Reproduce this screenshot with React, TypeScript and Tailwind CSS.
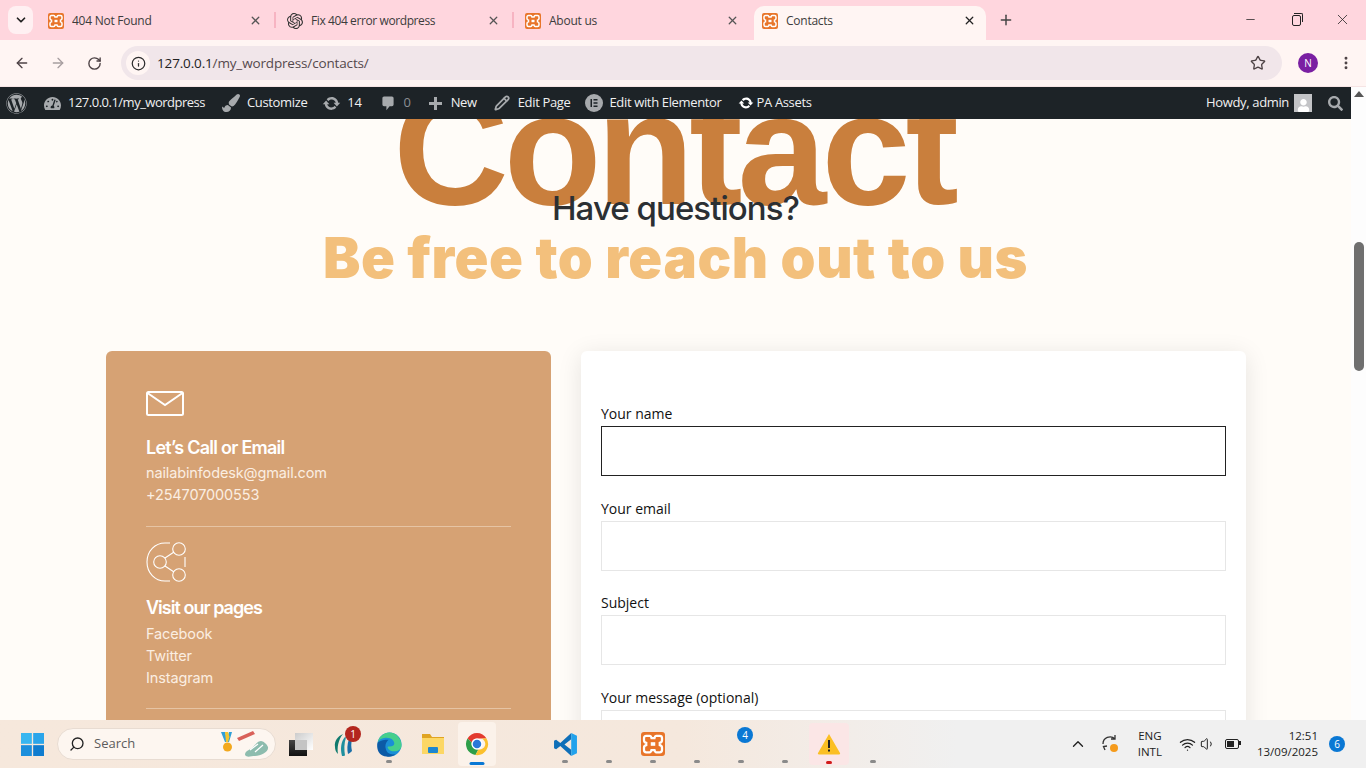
import { ArrowLeft, ArrowRight, RotateCw, Info, Star, X, Plus, ChevronDown, ChevronUp, Minus, MoreVertical, Search, Wifi, Volume1, Pencil } from 'lucide-react';
import { FaWordpress, FaPaintBrush, FaSearch, FaUser, FaTachometerAlt } from 'react-icons/fa';
import { SiOpenai } from 'react-icons/si';

const chromeFont = '[font-family:"Open_Sans","Liberation_Sans",sans-serif]';

function Xampp({ size = 16 }: { size?: number }) {
  return (
    <svg width={size} height={size} viewBox="0 0 16 16" className="shrink-0">
      <rect width="16" height="16" rx="2" fill="#e8752a" />
      <path d="M3.500 2.500h2.300c.8 0 1 .6 1.200 1.500h2c.2-.9.4-1.500 1.200-1.500h2.300c1 0 1.500.7 1.500 1.500v1.500c0 1-.6 1.500-1.500 1.700v1.600c.9.2 1.500.7 1.500 1.700V12c0 .8-.5 1.500-1.500 1.500h-2.300c-.8 0-1-.6-1.200-1.500H7c-.2.900-.4 1.500-1.200 1.500H3.500C2.500 13.500 2 12.800 2 12v-1.500c0-1 .6-1.500 1.500-1.700V7.200C2.600 7 2 6.500 2 5.500V4c0-.8.5-1.500 1.500-1.500z" fill="none" stroke="#fff" strokeWidth="1.500" />
      <rect x="6.500" y="6.800" width="3" height="2.400" fill="#fff" />
    </svg>
  );
}

function UpdateIcon({ size, className }: { size: number; className: string }) {
  return (
    <svg width={size} height={size} viewBox="0 0 20 20" fill="currentColor" className={`shrink-0 ${className}`}>
      <path d="M10.200 3.280c3.530 0 6.430 2.610 6.900 6h2.080l-3.500 4-3.500-4h2.320c-.45-1.970-2.210-3.440-4.300-3.440-1.450 0-2.730.71-3.540 1.800L4.950 5.650c1.280-1.440 3.140-2.370 5.250-2.370zm-.4 13.440c-3.520 0-6.430-2.610-6.900-6H.82l3.500-4c1.170 1.330 2.330 2.670 3.500 4H5.500c.45 1.980 2.210 3.440 4.300 3.440 1.450 0 2.730-.71 3.540-1.800l1.710 1.950c-1.280 1.440-3.140 2.410-5.250 2.410z" />
    </svg>
  );
}

function Tab({ title, icon, active, width, tight }: { title: string; icon: React.ReactNode; active?: boolean; width: string; tight?: boolean }) {
  return (
    <div className={`flex items-center h-[34px] mt-[6px] pb-[5px] pl-2 pr-[10px] gap-2 ${width} ${active ? 'bg-[#fff5f3] rounded-t-[10px]' : ''}`}>
      {icon}
      <span className={`flex-1 truncate text-xs text-[#3c3c3c] ${tight ? 'tracking-[-0.4px]' : 'tracking-[-0.25px]'}`}>{title}</span>
      <X size={13} strokeWidth={2.4} className={active ? 'text-[#222]' : 'text-[#555]'} />
    </div>
  );
}

function TabStrip() {
  return (
    <div className="h-10 bg-[#ffd6de] flex items-start shrink-0">
      <div className="ml-[8px] mt-[6px] w-[25px] h-[28px] rounded-lg bg-[#fff0f2] flex items-center justify-center">
        <ChevronDown size={14} strokeWidth={3} className="text-[#222]" />
      </div>
      <div className="ml-[7px] flex items-start">
        <Tab title="404 Not Found" icon={<Xampp />} width="w-[232px]" />
        <div className="w-[2px] h-4 mt-3 ml-[2px] mr-[3px] bg-[#f7b4c2]" />
        <Tab title="Fix 404 error wordpress" tight icon={<SiOpenai size={16} className="text-[#333] shrink-0" />} width="w-[231px]" />
        <div className="w-[2px] h-4 mt-3 ml-[2px] mr-[3px] bg-[#f7b4c2]" />
        <Tab title="About us" icon={<Xampp />} width="w-[232px]" />
        <div className="w-[5px]" />
        <Tab title="Contacts" icon={<Xampp />} active width="w-[232px]" />
      </div>
      <Plus size={16} strokeWidth={2.2} className="ml-[12px] mt-3 text-[#444]" />
      <div className="ml-auto flex items-center h-[40px] pb-[1px] text-[#222]">
        <div className="w-[46px] flex justify-center"><Minus size={13} strokeWidth={1.4} /></div>
        <div className="w-[46px] flex justify-center">
          <div className="relative w-[9px] h-[11px] border border-[#222] rounded-[2px] bg-[#ffd6de] mt-[1px]">
            <div className="absolute -top-[3px] left-[1px] w-[9px] h-[9px] border-t border-r border-[#222] rounded-tr-[2px]" />
          </div>
        </div>
        <div className="w-[47px] flex justify-center"><X size={17} strokeWidth={1.1} /></div>
      </div>
    </div>
  );
}

function Toolbar() {
  return (
    <div className="h-[47px] bg-[#fff5f3] flex items-center shrink-0 border-b border-[#f6e4e4]">
      <div className="flex items-center gap-5 pl-[14px] pr-[19px]">
        <ArrowLeft size={16} strokeWidth={2} className="text-[#4d4245]" />
        <ArrowRight size={16} strokeWidth={2} className="text-[#a79ea0]" />
        <RotateCw size={15} strokeWidth={2.2} className="text-[#4d4245] ml-[1px]" />
      </div>
      <div className="w-[1161px] h-[34px] rounded-full bg-[#f1e6ea] flex items-center pl-[5px] pr-4">
        <div className="w-6 h-6 rounded-full bg-[#fff5f3] flex items-center justify-center">
          <Info size={15} strokeWidth={2} className="text-[#2c2c2c]" />
        </div>
        <span className="ml-[7px] text-[13.5px] tracking-[-0.15px] text-[#55494d]"><span className="text-[#222]">127.0.0.1</span>/my_wordpress/contacts/</span>
        <Star size={16} strokeWidth={2} className="ml-auto text-[#4d4245]" />
      </div>
      <div className="ml-[16px] w-5 h-5 rounded-full bg-[#7a1fa2] text-white text-[10px] flex items-center justify-center">N</div>
      <MoreVertical size={16} strokeWidth={2.4} className="ml-[20px] text-[#4d4245]" />
    </div>
  );
}

function BarItem({ icon, label, className = '' }: { icon: React.ReactNode; label: string; className?: string }) {
  return (
    <div className={`flex items-center ${className}`}>
      {icon}
      <span>{label}</span>
    </div>
  );
}

function AdminBar() {
  const ic = 'text-[#a7aaad]';
  return (
    <div className="h-8 bg-[#1d2327] flex items-center text-[13px] text-[#f0f0f1] pl-[6px] pr-[8px] tracking-[-0.35px]">
      <FaWordpress size={21} className={ic} />
      <BarItem className="ml-[17px] gap-[7px] tracking-[-0.5px]" icon={<FaTachometerAlt size={17} className={ic} />} label="127.0.0.1/my_wordpress" />
      <BarItem className="ml-[17px] gap-[7px]" icon={<FaPaintBrush size={18} className={ic} />} label="Customize" />
      <BarItem className="ml-[15px] gap-[6px]" icon={<UpdateIcon size={19} className={ic} />} label="14" />
      <BarItem
        className="ml-[18px] gap-[8px] text-[#8c8f94]"
        icon={
          <svg width="16" height="16" viewBox="0 0 20 20" fill="currentColor" className={ic}>
            <path d="M5 2h10c1.100 0 2 .9 2 2v8c0 1.100-.9 2-2 2h-3l-4 5v-5H5c-1.100 0-2-.9-2-2V4c0-1.100.9-2 2-2z" />
          </svg>
        }
        label="0"
      />
      <BarItem
        className="ml-[17px] gap-[8px]"
        icon={
          <svg width="15" height="15" viewBox="0 0 15 15" fill="currentColor" className={ic}>
            <path d="M6 1h3v5h5v3H9v5H6V9H1V6h5z" />
          </svg>
        }
        label="New"
      />
      <BarItem className="ml-[17px] gap-[8px]" icon={<Pencil size={16} strokeWidth={2.6} className={ic} />} label="Edit Page" />
      <BarItem
        className="ml-[15px] gap-[6px]"
        icon={
          <svg width="18" height="18" viewBox="0 0 18 18" className={ic}>
            <circle cx="9" cy="9" r="9" fill="currentColor" />
            <rect x="5.500" y="5" width="1.500" height="8" fill="#1d2327" />
            <rect x="8.500" y="5" width="4" height="1.500" fill="#1d2327" />
            <rect x="8.500" y="8.250" width="4" height="1.500" fill="#1d2327" />
            <rect x="8.500" y="11.500" width="4" height="1.500" fill="#1d2327" />
          </svg>
        }
        label="Edit with Elementor"
      />
      <BarItem className="ml-[16px] gap-[3px]" icon={<UpdateIcon size={16} className="text-white" />} label="PA Assets" />
      <div className="ml-auto flex items-center gap-[5px]">
        <span>Howdy, admin</span>
        <span className="w-[18px] h-[18px] bg-[#c3c4c7] flex items-end justify-center overflow-hidden"><FaUser size={13} className="text-white" /></span>
      </div>
      <FaSearch size={15} className="ml-[16px] text-[#a7aaad]" />
    </div>
  );
}

function ShareIcon() {
  return (
    <svg width="40" height="40" viewBox="0 0 40 40" fill="none" stroke="#fff" strokeWidth="1.100">
      <path d="M24 1H19C9 1 1 9 1 20s8 19 18 19h5" />
      <circle cx="33" cy="7" r="6.300" />
      <circle cx="33" cy="33" r="6.300" />
      <circle cx="14" cy="20" r="6.300" />
      <path d="M19 16l9-6M19 24l9 6M39 15v10" />
    </svg>
  );
}

function InfoCard() {
  return (
    <div className="w-[445px] h-[500px] shrink-0 rounded-[6px] bg-[#d6a274] pt-[40px] px-[40px] text-white">
      <svg width="38" height="25" viewBox="0 0 38 25" fill="none" stroke="#fff" strokeWidth="2" className="block">
        <rect x="1" y="1" width="36" height="23" rx="1.500" />
        <path d="M1.500 2L19 14 36.500 2" />
      </svg>
      <h3 className="mt-[19px] text-[18px] leading-[26px] font-semibold tracking-[-0.75px]">Let’s Call or Email</h3>
      <div className="mt-[1px] text-[14.500px] tracking-[-0.13px] leading-[22px] text-[#fbeee2]">
        <p>nailabinfodesk@gmail.com</p>
        <p>+254707000553</p>
      </div>
      <div className="mt-[20px] h-px bg-[#e6c4a4]" />
      <div className="mt-[15px]"><ShareIcon /></div>
      <h3 className="mt-[13px] text-[18px] leading-[26px] font-semibold tracking-[-0.98px]">Visit our pages</h3>
      <div className="mt-[2px] text-[14.500px] tracking-[-0.13px] leading-[22px] text-[#fbeee2]">
        <p>Facebook</p>
        <p>Twitter</p>
        <p>Instagram</p>
      </div>
      <div className="mt-[19px] h-px bg-[#e6c4a4]" />
    </div>
  );
}

function Field({ label, focused }: { label: string; focused?: boolean }) {
  return (
    <div className="mb-[22.500px]">
      <label className={`block text-[14px] leading-[20px] text-[#111] mb-[2px] ${chromeFont}`}>{label}</label>
      <div className={`h-[50px] bg-white border ${focused ? 'border-[#222]' : 'border-[#e6e6e6]'}`} />
    </div>
  );
}

function FormCard() {
  return (
    <div className="w-[665px] h-[500px] shrink-0 rounded-[6px] bg-white px-5 pt-[53px] shadow-[0_4px_24px_rgba(0,0,0,0.1)]">
      <Field label="Your name" focused />
      <Field label="Your email" />
      <Field label="Subject" />
      <Field label="Your message (optional)" />
    </div>
  );
}

function Page() {
  return (
    <div className="flex-1 relative overflow-hidden bg-[#fffcf8] [font-family:Inter,'Liberation_Sans',sans-serif]">
      <div className="flex flex-col items-center">
        <h1 className="mt-[-50px] mr-[4px] h-[149px] text-[160px] leading-[160px] font-bold text-[#c97f3d] tracking-[-5px] [font-family:'Liberation_Sans',sans-serif] whitespace-nowrap">Contact</h1>
        <h2 className="relative mt-[-30px] text-[33px] leading-[40px] font-medium text-[#2b2f33] tracking-[-0.95px]">Have questions?</h2>
        <h2 className="text-[56px] leading-[60px] font-black text-[#f3c07c] tracking-[0.6px] whitespace-nowrap">Be free to reach out to us</h2>
      </div>
      <div className="mt-[63px] ml-[106px] flex gap-[30px]">
        <InfoCard />
        <FormCard />
      </div>
    </div>
  );
}

function Scrollbar() {
  return (
    <div className="w-[15px] bg-[#fdfdfd] flex flex-col items-center shrink-0">
      <div className="mt-[4px] w-0 h-0 border-l-[5px] border-r-[5px] border-b-[6px] border-l-transparent border-r-transparent border-b-[#555]" />
      <div className="mt-[145px] w-[10px] h-[129px] rounded-full bg-[#6f6f6f]" />
    </div>
  );
}

function Dot({ color = 'bg-[#8a8a8a]' }: { color?: string }) {
  return <span className={`absolute bottom-[5px] left-1/2 -translate-x-1/2 w-[6px] h-[3px] rounded-full ${color}`} />;
}

function TaskIcon({ children, dot, className = '' }: { children?: React.ReactNode; dot?: boolean; className?: string }) {
  return (
    <div className={`relative w-[44px] h-[48px] flex items-center justify-center shrink-0 ${className}`}>
      {children}
      {dot && <Dot />}
    </div>
  );
}

function Taskbar() {
  return (
    <div className={`h-12 bg-gradient-to-r from-[#f6e8dc] via-[#f5e8dd] via-50% to-[#f0f0f0] to-70% flex items-center shrink-0 ${chromeFont}`}>
      <svg width="23" height="23" viewBox="0 0 24 24" className="ml-[21px] shrink-0">
        <rect x="0" y="0" width="11.300" height="11.300" fill="#38b6f0" />
        <rect x="12.700" y="0" width="11.300" height="11.300" fill="#2aa5ea" />
        <rect x="0" y="12.700" width="11.300" height="11.300" fill="#1c8fdc" />
        <rect x="12.700" y="12.700" width="11.300" height="11.300" fill="#0f7ccf" />
      </svg>
      <div className="ml-[13px] w-[219px] h-[32px] rounded-full bg-[#fdf6f0] border border-[#e8dcd2] flex items-center pl-[11px] pr-[5px] shrink-0">
        <Search size={16} strokeWidth={2} className="text-[#222] -scale-x-100" />
        <span className="ml-[9px] text-[13px] text-[#5c5c5c]">Search</span>
        <svg width="50" height="28" viewBox="0 0 50 28" className="ml-auto">
          <path d="M1 2l4 0 2 7 2-7 3 0-3 10H5z" fill="#2f9fd8" />
          <path d="M5 2l3 0 1.500 5-1.500 5H6z" fill="#f4c430" />
          <circle cx="7.500" cy="17" r="4.500" fill="#f2a81e" />
          <path d="M17 8L33 1l2 3-16 7z" fill="#d9615a" />
          <path d="M25 25c0-5 6-5 9-9 2-2 4-5 7-5 2 0 6 3 7 6 1 5-7 9-13 9-4 0-8 2-10-1z" fill="#8dbcae" />
          <path d="M30 20l8-6M35 22l8-7" stroke="#fff" strokeWidth="1.200" />
        </svg>
      </div>
      <TaskIcon className="ml-[3px]">
        <div className="relative w-6 h-[23px]">
          <div className="absolute right-0 top-0 w-[18px] h-[17px] bg-gradient-to-br from-[#ccc] to-[#fff]" />
          <div className="absolute left-0 bottom-0 w-[18px] h-[16px] bg-gradient-to-b from-[#444] to-[#111]" />
          <div className="absolute left-[6px] top-[7px] w-[12px] h-[10px] bg-[#c4c4c4]" />
        </div>
      </TaskIcon>
      <TaskIcon>
        <svg width="24" height="26" viewBox="0 0 24 26">
          <path d="M10 3C5 5 1 10 2 16c0 3 1 5 3 7 -1-6 0-14 5-20z" fill="#0f7a6e" />
          <path d="M12 6C8 10 7 18 9 25c1 0 2 0 3-.5-1-6-1-12 1-18z" fill="#1e8f9e" />
          <path d="M16 8c-2 5-2 11-1 15 2-1 3-2 4-3-1-4-1-8 0-11z" fill="#1a6fa8" />
        </svg>
        <span className="absolute top-[6px] right-[6px] w-4 h-4 rounded-full bg-[#b3261e] text-white text-[10px] flex items-center justify-center">1</span>
      </TaskIcon>
      <TaskIcon dot>
        <svg width="25" height="25" viewBox="0 0 26 26">
          <circle cx="13" cy="13" r="12.500" fill="#1b8fd6" />
          <path d="M25.500 14C25.500 7 20 .5 13 .5 7 .5 2 5 .7 11c2-4 6-5 9.300-5 5 0 8 3 8 6 0 2-2 3-5 3-1 0-2 0-2 1 1 3 4 4 7 4 4 0 7.500-2 7.500-6z" fill="#45cf8c" />
          <path d="M.7 11c-1.700 7 1.300 14 9.300 14.500 3 .5 7 0 9-2.500-4 1-9 0-10-6-1-4 1-7 3-9-4 0-8.300.5-11.300 3z" fill="#0c5aa6" />
        </svg>
      </TaskIcon>
      <TaskIcon>
        <svg width="24" height="24" viewBox="0 0 24 24">
          <path d="M1 2h8l2 3h12v17H1z" fill="#e0a422" />
          <path d="M1 6h22v16H1z" fill="#fcd765" />
          <rect x="7" y="15" width="10" height="6" fill="#1c86d1" rx="1" />
        </svg>
      </TaskIcon>
      <TaskIcon className="!w-[38px] mx-[3px] bg-[#fbf2ea] rounded-[4px] !h-[44px]">
        <svg width="24" height="24" viewBox="0 0 48 48">
          <path d="M5 13A22 22 0 0 1 43 13H24a11 11 0 0 0-10.500 8z" fill="#e33b2e" />
          <path d="M5 13l8.500 8A11 11 0 0 0 27 34.500L21 46A22 22 0 0 1 5 13z" fill="#2e9e48" />
          <path d="M43 13A22 22 0 0 1 21 46l6-11.500A11 11 0 0 0 32 13z" fill="#fbc02d" />
          <circle cx="24" cy="24" r="11" fill="#fff" />
          <circle cx="24" cy="24" r="8.500" fill="#2a78d8" />
        </svg>
        <span className="absolute bottom-[1px] left-1/2 -translate-x-1/2 w-[15px] h-[3px] rounded-full bg-[#0a78d4]" />
      </TaskIcon>
      <TaskIcon dot className="ml-[44px]">
        <svg width="25" height="25" viewBox="0 0 24 24">
          <path d="M17.500 1 7 10.500 3 7.500 1 8.500v7l2 1 4-3L17.500 23V17L11 12l6.500-5z" fill="#0f6fb8" />
          <path d="M17.500 1 23 3.500v17L17.500 23z" fill="#22a2ec" />
        </svg>
      </TaskIcon>
      <TaskIcon dot />
      <TaskIcon dot><Xampp size={24} /></TaskIcon>
      <TaskIcon dot />
      <TaskIcon dot>
        <span className="absolute top-[7px] left-[18px] w-4 h-4 rounded-full bg-[#0a78d4] text-white text-[10px] flex items-center justify-center">4</span>
      </TaskIcon>
      <TaskIcon dot />
      <TaskIcon className="bg-[#fbe6e6] rounded-[4px] !w-[40px] !h-[42px] mx-[2px]">
        <svg width="24" height="22" viewBox="0 0 24 22">
          <path d="M12 1L23 20a1 1 0 0 1-1 1.500H2A1 1 0 0 1 1 20z" fill="#fbbf24" />
          <rect x="11" y="7" width="2" height="8" fill="#222" />
          <rect x="11" y="16.500" width="2" height="2" fill="#222" />
        </svg>
        <span className="absolute bottom-[1px] left-1/2 -translate-x-1/2 w-[6px] h-[3px] rounded-full bg-[#d11a1a]" />
      </TaskIcon>
      <TaskIcon dot />
      <div className="ml-auto flex items-center text-[#222]">
        <ChevronUp size={18} strokeWidth={1.800} />
        <svg width="20" height="22" viewBox="0 0 20 22" fill="none" stroke="#333" strokeWidth="1.300" className="ml-[14px]">
          <path d="M2 11a7 7 0 0 1 12-5M14 2v4h-4M4 17l-1.500-3.500L6 13" />
          <circle cx="13" cy="15" r="4" fill="#f59b1c" stroke="none" />
        </svg>
        <div className="ml-[17px] text-[11.500px] leading-[16px] text-center"><div>ENG</div><div>INTL</div></div>
        <Wifi size={17} strokeWidth={1.800} className="ml-[17px]" />
        <Volume1 size={16} strokeWidth={1.500} className="ml-[4px]" />
        <div className="ml-[9px] relative w-[14px] h-[10px] border-[1.500px] border-[#222] rounded-[2px] p-[1px] mr-[2px]">
          <div className="w-[7px] h-full bg-[#222]" />
          <div className="absolute -right-[3px] top-[1px] w-[1.500px] h-[4px] bg-[#222]" />
        </div>
        <div className="ml-[16px] text-[11.500px] leading-[16px] text-right"><div>12:51</div><div>13/09/2025</div></div>
        <span className="ml-[11px] mr-[21px] w-4 h-4 rounded-full bg-[#0a78d4] text-white text-[10px] flex items-center justify-center">6</span>
      </div>
    </div>
  );
}

export default function App() {
  return (
    <div className={`w-[1366px] h-[768px] flex flex-col overflow-hidden ${chromeFont}`}>
      <TabStrip />
      <Toolbar />
      <div className="flex-1 flex min-h-0">
        <div className="flex-1 flex flex-col min-w-0">
          <AdminBar />
          <Page />
        </div>
        <Scrollbar />
      </div>
      <Taskbar />
    </div>
  );
}
